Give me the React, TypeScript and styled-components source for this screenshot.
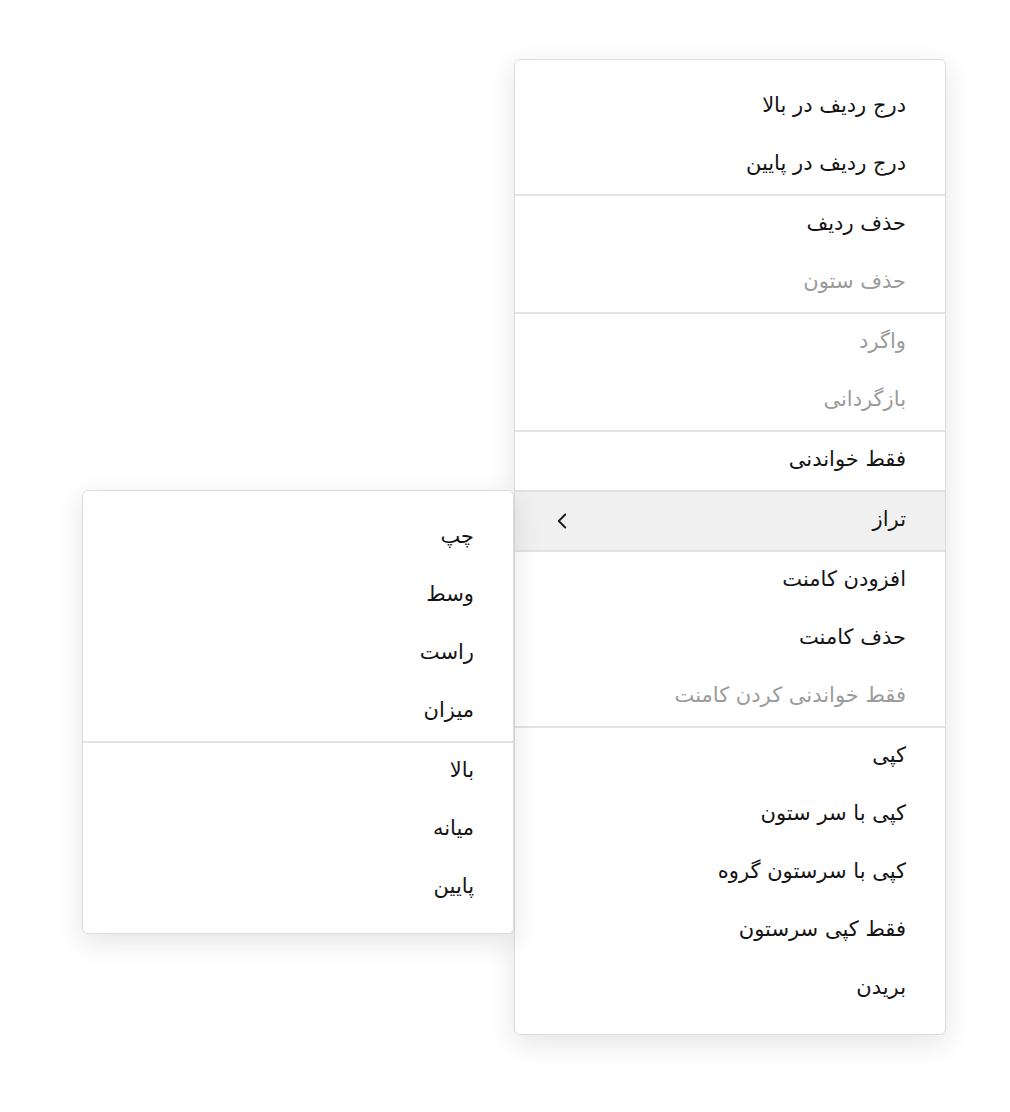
import { Fragment } from 'react';
import styled, { createGlobalStyle } from 'styled-components';
import { ChevronLeft } from 'lucide-react';

const GlobalStyle = createGlobalStyle`
  html, body { margin: 0; padding: 0; background: #ffffff; }
  body { font-family: 'DejaVu Sans', 'Liberation Sans', sans-serif; }
`;

const Page = styled.div`
  width: 1010px;
  min-height: 1112px;
  padding: 59px 0 0 514px;
  box-sizing: border-box;
`;

const Menu = styled.div`
  direction: rtl;
  width: 432px;
  box-sizing: border-box;
  background: #ffffff;
  border: 1px solid #dcdcdc;
  border-radius: 6px;
  padding: 18px 0 16px;
  box-shadow: 0 8px 28px rgba(0, 0, 0, 0.11);
  font-family: 'DejaVu Sans', sans-serif;
`;

// submenu opens to the left of the highlighted row
const SubMenu = styled(Menu)`
  position: absolute;
  top: -2px;
  right: calc(100% + 1px);
  z-index: 2;
`;

const Item = styled.div<{ $disabled?: boolean; $active?: boolean }>`
  position: relative;
  box-sizing: border-box;
  height: 58px;
  display: flex;
  align-items: center;
  justify-content: space-between;
  padding: 0 39px 4px 34px;
  font-size: 21px;
  color: ${p => (p.$disabled ? '#9b9b9b' : '#141414')};
  background: ${p => (p.$active ? '#f0f0f0' : 'transparent')};
`;

const Separator = styled.div`
  height: 2px;
  background: #e3e3e3;
`;

const Arrow = styled(ChevronLeft)`
  color: #1a1a1a;
  flex-shrink: 0;
  margin-top: 4px;
`;

type Entry = { label: string; disabled?: boolean };

const groups: Entry[][] = [
  [{ label: 'درج ردیف در بالا' }, { label: 'درج ردیف در پایین' }],
  [{ label: 'حذف ردیف' }, { label: 'حذف ستون', disabled: true }],
  [{ label: 'واگرد', disabled: true }, { label: 'بازگردانی', disabled: true }],
  [{ label: 'فقط خواندنی' }],
  [{ label: 'تراز' }],
  [
    { label: 'افزودن کامنت' },
    { label: 'حذف کامنت' },
    { label: 'فقط خواندنی کردن کامنت', disabled: true },
  ],
  [
    { label: 'کپی' },
    { label: 'کپی با سر ستون' },
    { label: 'کپی با سرستون گروه' },
    { label: 'فقط کپی سرستون' },
    { label: 'بریدن' },
  ],
];

const alignGroups: string[][] = [
  ['چپ', 'وسط', 'راست', 'میزان'],
  ['بالا', 'میانه', 'پایین'],
];

const AlignMenu = () => (
  <SubMenu>
    {alignGroups.map((g, gi) => (
      <Fragment key={gi}>
        {gi > 0 && <Separator />}
        {g.map(l => (
          <Item key={l}>{l}</Item>
        ))}
      </Fragment>
    ))}
  </SubMenu>
);

export default function App() {
  return (
    <>
      <GlobalStyle />
      <Page>
        <Menu>
          {groups.map((g, gi) => (
            <Fragment key={gi}>
              {gi > 0 && <Separator />}
              {g.map(e =>
                e.label === 'تراز' ? (
                  <Item key={e.label} $active>
                    <span>{e.label}</span>
                    <Arrow size={26} strokeWidth={1.7} />
                    <AlignMenu />
                  </Item>
                ) : (
                  <Item key={e.label} $disabled={e.disabled}>
                    <span>{e.label}</span>
                  </Item>
                )
              )}
            </Fragment>
          ))}
        </Menu>
      </Page>
    </>
  );
}
